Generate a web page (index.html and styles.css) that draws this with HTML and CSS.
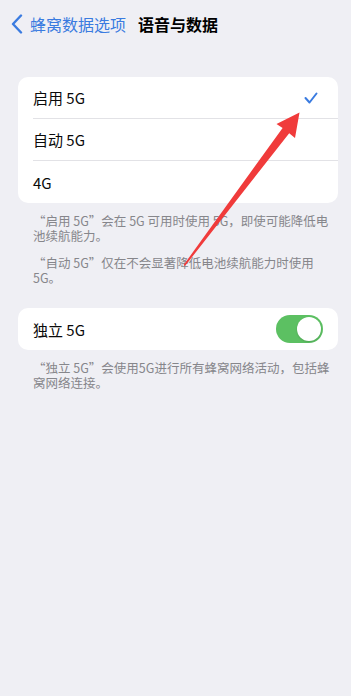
FILE: index.html
```html
<!DOCTYPE html>
<html lang="zh-CN">
<head>
<meta charset="utf-8">
<title>语音与数据</title>
<link rel="stylesheet" href="styles.css">
</head>
<body>
<div class="screen">
  <header class="nav">
    <svg class="chev" width="12" height="20" viewBox="0 0 12 20"><polyline points="10,1.5 2,10 10,18.5" fill="none" stroke="#3a7be0" stroke-width="2.4" stroke-linecap="round" stroke-linejoin="round"/></svg>
    <span class="back">蜂窝数据选项</span>
    <span class="title">语音与数据</span>
  </header>

  <section class="card first">
    <div class="row"><div class="row-in"><span>启用 5G</span>
      <svg class="check" width="14" height="12" viewBox="0 0 14 12"><polyline points="1.5,6 5.5,10.5 12.5,1.5" fill="none" stroke="#3a7be0" stroke-width="2" stroke-linecap="round" stroke-linejoin="round"/></svg></div></div>
    <div class="row"><div class="row-in"><span>自动 5G</span></div></div>
    <div class="row"><div class="row-in last"><span>4G</span></div></div>
  </section>
  <div class="foot">
    <p>“启用 5G”会在 5G 可用时使用 5G，即使可能降低电池续航能力。</p>
    <p>“自动 5G”仅在不会显著降低电池续航能力时使用 5G。</p>
  </div>

  <section class="card second">
    <div class="row"><div class="row-in last"><span>独立 5G</span>
      <div class="toggle"><div class="knob"></div></div></div></div>
  </section>
  <div class="foot">
    <p>“独立 5G”会使用5G进行所有蜂窝网络活动，包括蜂窝网络连接。</p>
  </div>

  <svg class="arrow" width="351" height="696" viewBox="0 0 351 696">
    <polygon points="299.5,112.5 295,138 289.2,133.2 185,266 183.6,265 282.6,128 276.5,124" fill="#f03b3b"/>
  </svg>
</div>
</body>
</html>
```

FILE: styles.css
```css
* { box-sizing: border-box; }
html, body {
  margin: 0;
  padding: 0;
  background: #efeff4;
}
body {
  font-family: "Noto Sans CJK SC", "Noto Sans", sans-serif;
  color: #0a0a0a;
}
.screen {
  position: relative;
  width: 351px;
  height: 696px;
  overflow: hidden;
}
.nav {
  height: 48px;
  display: flex;
  align-items: center;
  padding-left: 11px;
}
.chev { margin-right: 7px; }
.back {
  color: #3a7be0;
  font-size: 16px;
  margin-right: 12px;
}
.title {
  font-size: 16px;
  font-weight: 700;
  color: #000;
}
.card {
  background: #fff;
  border-radius: 10px;
  margin: 0 13px 0 18px;
}
.card.first { margin-top: 29px; }
.card.second { margin-top: 23px; }
.row {
  padding-left: 15px;
}
.row-in {
  height: 42px;
  display: flex;
  align-items: center;
  justify-content: space-between;
  border-bottom: 1px solid #e2e2e6;
  padding-right: 20px;
  font-size: 15px;
}
.row-in.last { border-bottom: none; }
.second .row-in { padding-right: 15px; }
.toggle {
  width: 47px;
  height: 28px;
  border-radius: 14px;
  background: #5cc062;
  display: flex;
  justify-content: flex-end;
  align-items: center;
  padding: 2px;
}
.knob {
  width: 24px;
  height: 24px;
  border-radius: 50%;
  background: #fff;
  box-shadow: 0 1px 2px rgba(0,0,0,0.15);
}
.foot {
  padding: 10px 18px 0 33px;
  color: #86868b;
  font-size: 12.5px;
  line-height: 15px;
}
.foot p { margin: 0 0 12px 0; }
.foot p:last-child { margin-bottom: 0; }
.arrow {
  position: absolute;
  left: 0;
  top: 0;
  pointer-events: none;
}
```
